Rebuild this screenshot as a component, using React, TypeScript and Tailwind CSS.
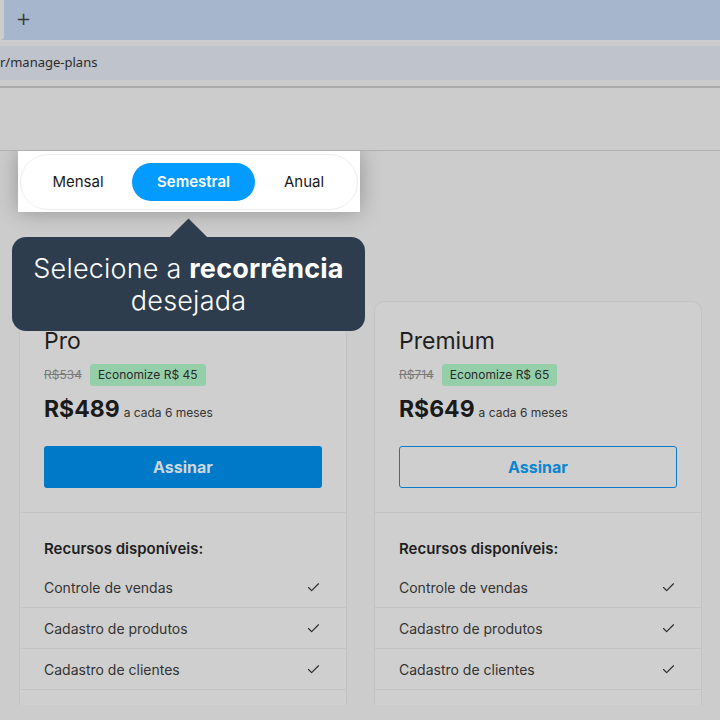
import React, { useState } from 'react';
import { Check } from 'lucide-react';

type Plan = {
  name: string;
  oldPrice: string;
  saving: string;
  price: string;
  highlighted: boolean;
};

const plans: Plan[] = [
  { name: 'Pro', oldPrice: 'R$534', saving: 'Economize R$ 45', price: 'R$489', highlighted: true },
  { name: 'Premium', oldPrice: 'R$714', saving: 'Economize R$ 65', price: 'R$649', highlighted: false },
];

const features = ['Controle de vendas', 'Cadastro de produtos', 'Cadastro de clientes', 'Controle de estoque'];

const periods = [
  { id: 'mensal', label: 'Mensal', width: 'w-[108px]' },
  { id: 'semestral', label: 'Semestral', width: 'w-[123px]' },
  { id: 'anual', label: 'Anual', width: 'w-[98px]' },
];

/**
 * Fake browser chrome (tab strip + address bar)
 */
const BrowserChrome: React.FC = () => (
  <div className="bg-[#cccccc]">
    <div className="relative h-[40px] bg-[#a5b6cd]">
      <div className="absolute left-0 top-0 h-[40px] w-[4px] rounded-br-[6px] bg-[#cccccc]" />
      <span className="absolute left-[16px] top-[8px] text-[18px] leading-[22px] text-[#3a3a3a]" style={{ fontFamily: '"DejaVu Sans", sans-serif' }}>
        +
      </span>
    </div>
    <div className="pt-[6px] pb-[6px]">
      <div className="flex h-[34px] items-center bg-[#bfc3cb]">
        <span className="text-[13px] text-[#2b2b2b]" style={{ fontFamily: '"Noto Sans", sans-serif' }}>
          r/manage-plans
        </span>
      </div>
    </div>
    <div className="h-[2px] bg-[#ababab]" />
  </div>
);

const PlanCard: React.FC<{ plan: Plan }> = ({ plan }) => (
  <div className="rounded-t-[10px] border border-b-0 border-[#c3c3c3] bg-[#cfcfcf]">
    <div className="px-[24px] pt-[23px] pb-[24px]">
      <h2 className="text-[23px] leading-[32px] text-[#1f1f1f]">{plan.name}</h2>
      <div className="mt-[7px] flex items-center gap-[8px]">
        <span className="text-[12px] text-[#7a7a7a] line-through">{plan.oldPrice}</span>
        <span className="rounded-[3px] bg-[#94cfaa] px-[8px] py-[2px] text-[12px] leading-[18px] text-[#2a2a2a]">
          {plan.saving}
        </span>
      </div>
      <div className="mt-[9px] flex items-baseline gap-[4px]">
        <span className="text-[23px] font-bold leading-[28px] text-[#1a1a1a]">{plan.price}</span>
        <span className="text-[12px] text-[#333333]">a cada 6 meses</span>
      </div>
      {plan.highlighted ? (
        <button className="mt-[23px] flex h-[42px] w-full items-center justify-center rounded-[3px] bg-[#0079c9] text-[16px] font-bold text-[#cdd6df]">
          Assinar
        </button>
      ) : (
        <button className="mt-[23px] flex h-[42px] w-full items-center justify-center rounded-[3px] border border-[#0a7ac9] text-[16px] font-bold text-[#0a85d0]">
          Assinar
        </button>
      )}
    </div>
    <div className="border-t border-[#c4c4c4] pt-[26px]">
      <h3 className="px-[24px] text-[15px] font-semibold leading-[20px] text-[#1f1f1f]">Recursos disponíveis:</h3>
      <ul className="mt-[8px]">
        {features.map(f => (
          <li key={f} className="flex h-[41px] items-center justify-between border-b border-[#c4c4c4] px-[24px]">
            <span className="text-[14px] text-[#333333]">{f}</span>
            <Check size={15} strokeWidth={1.8} className="mr-[1px] text-[#2a2a2a]" />
          </li>
        ))}
      </ul>
    </div>
  </div>
);

export default function App() {
  const [period, setPeriod] = useState('semestral');

  return (
    <div className="h-[720px] w-[720px] overflow-hidden bg-[#cccccc]" style={{ fontFamily: 'Inter, "Noto Sans", sans-serif' }}>
      <BrowserChrome />

      {/* page header */}
      <div className="h-[63px] border-b border-[#b0b0b0]" />

      <div className="relative h-[554px] overflow-hidden">
        {/* spotlighted period toggle */}
        <div className="ml-[18px] w-[342px] bg-white px-[2px] pt-[3px] pb-[2px] shadow-[0_0_22px_rgba(0,0,0,0.28)]">
          <div className="flex h-[56px] items-center rounded-full border border-[#eeeeee] pl-[3px]">
            {periods.map(p => (
              <button
                key={p.id}
                onClick={() => setPeriod(p.id)}
                className={`${p.width} flex h-[38px] items-center justify-center rounded-full text-[15px] ${
                  period === p.id ? 'bg-[#039bff] font-semibold text-white' : 'text-[#1a1a1a]'
                }`}
              >
                {p.label}
              </button>
            ))}
          </div>
        </div>

        {/* plans */}
        <div className="mt-[89px] grid grid-cols-[328px_328px] gap-[27px] pl-[19px]">
          {plans.map(plan => (
            <PlanCard key={plan.name} plan={plan} />
          ))}
        </div>

        {/* tooltip */}
        <div className="absolute left-[12px] top-[86px] w-[353px]">
          <div className="absolute left-[163px] top-[-13px] h-[27px] w-[27px] rotate-45 bg-[#2e3d4e]" />
          <div className="relative flex h-[94px] flex-col items-center justify-center rounded-[14px] bg-[#2e3d4e] pt-[2px] text-center text-[27px] font-light leading-[32px] tracking-[0.2px] text-white">
            <p>
              Selecione a <strong className="font-bold">recorrência</strong>
            </p>
            <p>desejada</p>
          </div>
        </div>
      </div>
    </div>
  );
}
